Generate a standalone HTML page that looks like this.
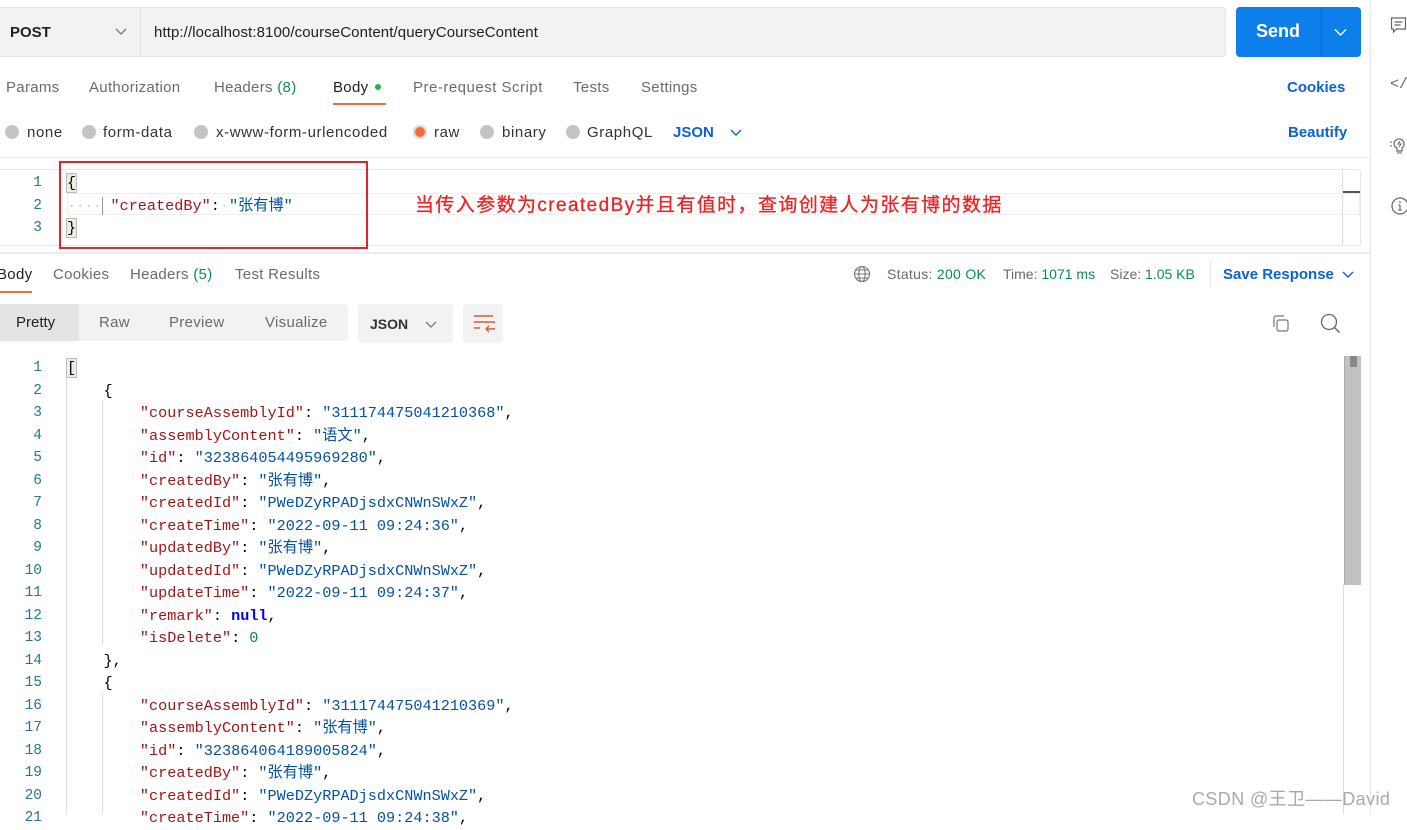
<!DOCTYPE html>
<html><head><meta charset="utf-8">
<style>
*{margin:0;padding:0;box-sizing:border-box}
body{width:1407px;height:814px;overflow:hidden;background:#fff;font-family:"Liberation Sans","Noto Sans CJK SC",sans-serif;position:relative;color:#212121}
.a{position:absolute;white-space:nowrap}
.ui{font-size:15px;color:#6b6b6b;letter-spacing:0.3px}
.rl{font-size:15px;color:#333;letter-spacing:0.6px}
.mono{font-family:"Liberation Mono","Noto Sans CJK SC",monospace;font-size:15.2px}
.k{color:#a31515}.s{color:#0451a5}.n{color:#098658}.nl{color:#0000ff;font-weight:bold}
.ln{color:#237893;text-align:right;width:42px;font-size:14.5px}
.radio{position:absolute;width:14px;height:14px;border-radius:50%;background:#c4c4c4}
.blue{color:#0b61d8;font-weight:bold}
</style></head><body>

<div class="a" style="left:0;top:7px;width:1226px;height:50px;background:#f2f2f2;border:1px solid #e4e4e4;border-left:none;border-radius:0 4px 4px 0"></div>
<div class="a" style="left:140px;top:8px;width:1px;height:48px;background:#e0e0e0"></div>
<div class="a" style="left:10px;top:24px;font-size:15px;font-weight:bold;color:#212121">POST</div>
<svg class="a" style="left:115px;top:27px" width="12" height="10"><path d="M1 2l5 5 5-5" stroke="#777" fill="none" stroke-width="1.3"/></svg>
<div class="a" style="left:154px;top:24px;font-size:15px;color:#212121;letter-spacing:0.1px">http://localhost:8100/courseContent/queryCourseContent</div>
<div class="a" style="left:1236px;top:7px;width:125px;height:50px;background:#0d7fea;border-radius:4px"></div>
<div class="a" style="left:1321px;top:7px;width:1px;height:50px;background:#0a6cc8"></div>
<div class="a" style="left:1256px;top:21px;font-size:18px;font-weight:bold;color:#fff">Send</div>
<svg class="a" style="left:1334px;top:28px" width="13" height="9"><path d="M1 1.5l5.5 5.5 5.5-5.5" stroke="#fff" fill="none" stroke-width="1.4"/></svg>

<div class="a" style="left:1370px;top:0;width:1px;height:814px;background:#e6e6e6"></div>
<svg class="a" style="left:1390px;top:16px" width="17" height="20"><path d="M1.5 2h14v11h-9l-3 3v-3h-2z" fill="none" stroke="#666" stroke-width="1.2"/><path d="M4.5 6h8M4.5 9h6" stroke="#666" stroke-width="1.2"/></svg>
<div class="a" style="left:1390px;top:76px;font-size:15px;color:#666;font-family:'Liberation Mono',monospace">&lt;/:</div>
<svg class="a" style="left:1390px;top:135px" width="17" height="22"><path d="M4 9a5 5 0 1 1 8 4v3h-5v-3a5 5 0 0 1-3-4z" fill="none" stroke="#666" stroke-width="1.2"/><path d="M7 18h5M10 6l-2 3h3l-2 3" stroke="#666" stroke-width="1.1" fill="none"/><path d="M0 7h2M0 11h2" stroke="#666"/></svg>
<svg class="a" style="left:1390px;top:196px" width="17" height="20"><circle cx="10" cy="10" r="8" fill="none" stroke="#666" stroke-width="1.2"/><path d="M10 9v5M8.5 14h3M8.5 9h1.5" stroke="#666" stroke-width="1.2"/><circle cx="10" cy="6.3" r="0.9" fill="#666"/></svg>

<div class="a ui" style="left:6px;top:79px">Params</div>
<div class="a ui" style="left:89px;top:79px">Authorization</div>
<div class="a ui" style="left:214px;top:79px">Headers <span style="color:#0e8a56">(8)</span></div>
<div class="a ui" style="left:333px;top:79px;color:#212121">Body</div>
<div class="a" style="left:375px;top:84px;width:6px;height:6px;border-radius:50%;background:#26b14c"></div>
<div class="a" style="left:333px;top:103px;width:53px;height:2px;background:#f26b3a"></div>
<div class="a ui" style="left:413px;top:79px;letter-spacing:0.5px">Pre-request Script</div>
<div class="a ui" style="left:573px;top:79px">Tests</div>
<div class="a ui" style="left:641px;top:79px">Settings</div>
<div class="a blue" style="left:1287px;top:79px;font-size:15px">Cookies</div>

<div class="radio" style="left:5px;top:125px"></div><div class="a rl" style="left:27px;top:124px">none</div>
<div class="radio" style="left:82px;top:125px"></div><div class="a rl" style="left:103px;top:124px">form-data</div>
<div class="radio" style="left:194px;top:125px"></div><div class="a rl" style="left:216px;top:124px">x-www-form-urlencoded</div>
<div class="radio" style="left:413px;top:125px;background:#f26b3a;box-shadow:0 0 0 2px #ddd inset"></div><div class="a rl" style="left:434px;top:124px">raw</div>
<div class="radio" style="left:480px;top:125px"></div><div class="a rl" style="left:502px;top:124px">binary</div>
<div class="radio" style="left:566px;top:125px"></div><div class="a rl" style="left:587px;top:124px">GraphQL</div>
<div class="a blue" style="left:673px;top:124px;font-size:15px">JSON</div>
<svg class="a" style="left:730px;top:128px" width="12" height="9"><path d="M1 2l5 5 5-5" stroke="#0b61d8" fill="none" stroke-width="1.4"/></svg>
<div class="a blue" style="left:1288px;top:124px;font-size:15px">Beautify</div>
<div class="a" style="left:0;top:157px;width:1370px;height:1px;background:#ececec"></div>

<div class="a" style="left:0;top:169px;width:1361px;height:77px;border:1px solid #e6e6e6;border-left:none;border-radius:0 3px 3px 0"></div>
<div class="a" style="left:1342px;top:170px;width:1px;height:75px;background:#ddd"></div>
<div class="a" style="left:1343px;top:191px;width:17px;height:2px;background:#555"></div>
<div class="a" style="left:67px;top:193px;width:1293px;height:22px;border:1px solid #eee"></div>
<div class="a mono ln" style="left:0;top:172px;line-height:22.5px">1<br>2<br>3</div>
<div class="a mono" style="left:67px;top:172px;line-height:22.5px;color:#000">
<span style="background:#e7efe0;outline:1px solid #bbb">{</span><br>
<span style="color:#ccc;letter-spacing:-0.5px">····</span><span style="border-left:1px solid #999;margin-left:1px;margin-right:7px"></span><span class="k">"createdBy"</span>:<span style="color:#ccc">·</span><span class="s">"张有博"</span><br>
<span style="background:#e7efe0;outline:1px solid #bbb">}</span></div>
<div class="a" style="left:59px;top:161px;width:309px;height:88px;border:2.5px solid #e8202a"></div>
<div class="a" style="left:415px;top:190px;font-size:19px;letter-spacing:1.4px;color:#ee2222;-webkit-text-stroke:0.3px #ee2222">当传入参数为createdBy并且有值时，查询创建人为张有博的数据</div>

<div class="a" style="left:0;top:252px;width:1370px;height:2px;background:#ededed"></div>
<div class="a ui" style="left:-3px;top:266px;color:#212121">Body</div>
<div class="a" style="left:0;top:291px;width:32px;height:2px;background:#f26b3a"></div>
<div class="a ui" style="left:53px;top:266px">Cookies</div>
<div class="a ui" style="left:130px;top:266px">Headers <span style="color:#0e8a56">(5)</span></div>
<div class="a ui" style="left:235px;top:266px">Test Results</div>
<svg class="a" style="left:853px;top:265px" width="18" height="18"><circle cx="9" cy="9" r="7.5" fill="none" stroke="#777" stroke-width="1.1"/><ellipse cx="9" cy="9" rx="3.2" ry="7.5" fill="none" stroke="#777" stroke-width="1.1"/><path d="M1.5 9h15M3 5h12M3 13h12" stroke="#777" stroke-width="1"/></svg>
<div class="a" style="left:887px;top:266px;font-size:14px;letter-spacing:0.3px;color:#6b6b6b">Status: <span style="color:#0e8a56">200 OK</span></div>
<div class="a" style="left:1003px;top:266px;font-size:14px;color:#6b6b6b">Time: <span style="color:#0e8a56">1071 ms</span></div>
<div class="a" style="left:1110px;top:266px;font-size:14px;color:#6b6b6b">Size: <span style="color:#0e8a56">1.05 KB</span></div>
<div class="a" style="left:1210px;top:261px;width:1px;height:26px;background:#e6e6e6"></div>
<div class="a blue" style="left:1223px;top:266px;font-size:15px">Save Response</div>
<svg class="a" style="left:1342px;top:270px" width="12" height="9"><path d="M1 2l5 5 5-5" stroke="#0b61d8" fill="none" stroke-width="1.4"/></svg>

<div class="a" style="left:0;top:304px;width:348px;height:37px;background:#f2f2f2;border-radius:0 4px 4px 0"></div>
<div class="a" style="left:0;top:304px;width:79px;height:37px;background:#e4e4e4"></div>
<div class="a" style="left:16px;top:314px;font-size:15px;color:#212121">Pretty</div>
<div class="a ui" style="left:99px;top:314px">Raw</div>
<div class="a ui" style="left:169px;top:314px">Preview</div>
<div class="a ui" style="left:265px;top:314px">Visualize</div>
<div class="a" style="left:358px;top:304px;width:95px;height:39px;background:#f2f2f2;border-radius:4px"></div>
<div class="a" style="left:370px;top:316px;font-size:14px;font-weight:bold;color:#333">JSON</div>
<svg class="a" style="left:425px;top:320px" width="12" height="9"><path d="M1 2l5 5 5-5" stroke="#777" fill="none" stroke-width="1.3"/></svg>
<div class="a" style="left:463px;top:304px;width:40px;height:39px;background:#f2f2f2;border-radius:4px"></div>
<svg class="a" style="left:473px;top:314px" width="22" height="20"><path d="M1 2h19M1 8h19a3 3 0 0 1 0 7h-6M1 14h6" stroke="#e0592a" fill="none" stroke-width="1.4"/><path d="M16 12l-3 3 3 3" stroke="#e0592a" fill="none" stroke-width="1.4"/></svg>
<svg class="a" style="left:1271px;top:314px" width="20" height="20"><path d="M3 13V4a2 2 0 0 1 2-2h8" fill="none" stroke="#777" stroke-width="1.2"/><rect x="6" y="6" width="11" height="11" rx="2" fill="none" stroke="#777" stroke-width="1.2"/></svg>
<svg class="a" style="left:1320px;top:313px" width="22" height="22"><circle cx="9" cy="9" r="7.5" fill="none" stroke="#666" stroke-width="1.3"/><path d="M14.5 14.5l5 5" stroke="#666" stroke-width="1.4"/></svg>

<div class="a" style="left:1344px;top:356px;width:17px;height:229px;background:#c1c1c1;border-left:1px solid #aaa"></div>
<div class="a" style="left:1350px;top:356px;width:7px;height:11px;background:#888"></div>
<div class="a" style="left:1343px;top:585px;width:1px;height:229px;background:#ddd"></div>
<div class="a" style="left:66px;top:378px;width:1px;height:436px;background:#ddd"></div>
<div class="a" style="left:102px;top:400px;width:1px;height:245px;background:#ddd"></div>
<div class="a" style="left:102px;top:692px;width:1px;height:122px;background:#ddd"></div>
<div class="a mono ln" style="left:0;top:357px;line-height:22.5px">1<br>2<br>3<br>4<br>5<br>6<br>7<br>8<br>9<br>10<br>11<br>12<br>13<br>14<br>15<br>16<br>17<br>18<br>19<br>20<br>21</div>
<div class="a mono" style="left:67px;top:357px;line-height:22.5px;color:#000">
<span style="background:#e7efe0;outline:1px solid #bbb">[</span><br>
&nbsp;&nbsp;&nbsp;&nbsp;{<br>
&nbsp;&nbsp;&nbsp;&nbsp;&nbsp;&nbsp;&nbsp;&nbsp;<span class="k">"courseAssemblyId"</span>: <span class="s">"311174475041210368"</span>,<br>
&nbsp;&nbsp;&nbsp;&nbsp;&nbsp;&nbsp;&nbsp;&nbsp;<span class="k">"assemblyContent"</span>: <span class="s">"语文"</span>,<br>
&nbsp;&nbsp;&nbsp;&nbsp;&nbsp;&nbsp;&nbsp;&nbsp;<span class="k">"id"</span>: <span class="s">"323864054495969280"</span>,<br>
&nbsp;&nbsp;&nbsp;&nbsp;&nbsp;&nbsp;&nbsp;&nbsp;<span class="k">"createdBy"</span>: <span class="s">"张有博"</span>,<br>
&nbsp;&nbsp;&nbsp;&nbsp;&nbsp;&nbsp;&nbsp;&nbsp;<span class="k">"createdId"</span>: <span class="s">"PWeDZyRPADjsdxCNWnSWxZ"</span>,<br>
&nbsp;&nbsp;&nbsp;&nbsp;&nbsp;&nbsp;&nbsp;&nbsp;<span class="k">"createTime"</span>: <span class="s">"2022-09-11 09:24:36"</span>,<br>
&nbsp;&nbsp;&nbsp;&nbsp;&nbsp;&nbsp;&nbsp;&nbsp;<span class="k">"updatedBy"</span>: <span class="s">"张有博"</span>,<br>
&nbsp;&nbsp;&nbsp;&nbsp;&nbsp;&nbsp;&nbsp;&nbsp;<span class="k">"updatedId"</span>: <span class="s">"PWeDZyRPADjsdxCNWnSWxZ"</span>,<br>
&nbsp;&nbsp;&nbsp;&nbsp;&nbsp;&nbsp;&nbsp;&nbsp;<span class="k">"updateTime"</span>: <span class="s">"2022-09-11 09:24:37"</span>,<br>
&nbsp;&nbsp;&nbsp;&nbsp;&nbsp;&nbsp;&nbsp;&nbsp;<span class="k">"remark"</span>: <span class="nl">null</span>,<br>
&nbsp;&nbsp;&nbsp;&nbsp;&nbsp;&nbsp;&nbsp;&nbsp;<span class="k">"isDelete"</span>: <span class="n">0</span><br>
&nbsp;&nbsp;&nbsp;&nbsp;},<br>
&nbsp;&nbsp;&nbsp;&nbsp;{<br>
&nbsp;&nbsp;&nbsp;&nbsp;&nbsp;&nbsp;&nbsp;&nbsp;<span class="k">"courseAssemblyId"</span>: <span class="s">"311174475041210369"</span>,<br>
&nbsp;&nbsp;&nbsp;&nbsp;&nbsp;&nbsp;&nbsp;&nbsp;<span class="k">"assemblyContent"</span>: <span class="s">"张有博"</span>,<br>
&nbsp;&nbsp;&nbsp;&nbsp;&nbsp;&nbsp;&nbsp;&nbsp;<span class="k">"id"</span>: <span class="s">"323864064189005824"</span>,<br>
&nbsp;&nbsp;&nbsp;&nbsp;&nbsp;&nbsp;&nbsp;&nbsp;<span class="k">"createdBy"</span>: <span class="s">"张有博"</span>,<br>
&nbsp;&nbsp;&nbsp;&nbsp;&nbsp;&nbsp;&nbsp;&nbsp;<span class="k">"createdId"</span>: <span class="s">"PWeDZyRPADjsdxCNWnSWxZ"</span>,<br>
&nbsp;&nbsp;&nbsp;&nbsp;&nbsp;&nbsp;&nbsp;&nbsp;<span class="k">"createTime"</span>: <span class="s">"2022-09-11 09:24:38"</span>,</div>

<div class="a" style="left:1192px;top:785px;font-size:18px;letter-spacing:0.4px;color:#aaa">CSDN @王卫——David</div>
</body></html>
